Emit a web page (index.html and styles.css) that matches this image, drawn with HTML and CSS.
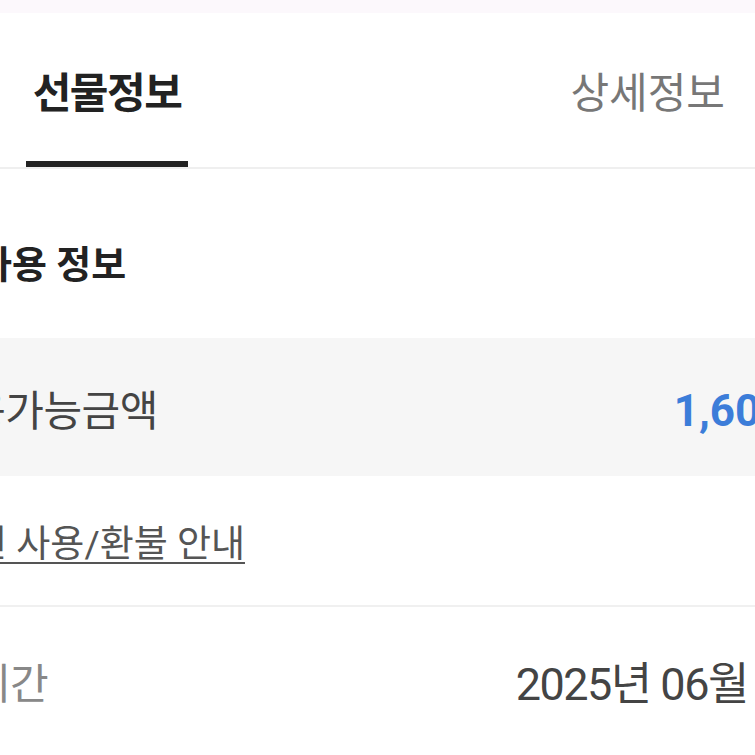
FILE: index.html
```html
<!DOCTYPE html>
<html lang="ko">
<head>
    <meta charset="UTF-8">
    <meta name="viewport" content="width=device-width, initial-scale=1.0">
    <title>선물정보</title>
    <link rel="stylesheet" href="styles.css">
</head>
<body>
    <div class="status"></div>

    <div class="tabs">
        <a class="tab tab-on">선물정보</a>
        <a class="tab tab-off">상세정보</a>
    </div>

    <div class="sheet">
        <h2 class="title">사용 정보</h2>

        <div class="amount">
            <span class="amount-label">사용가능금액</span>
            <span class="amount-value">1,600원</span>
        </div>

        <div class="guide">
            <a class="guide-link">상품권 사용/환불 안내</a>
        </div>

        <div class="period">
            <span class="period-label">유효기간</span>
            <span class="period-value">2025년 06월 30일</span>
        </div>
    </div>
</body>
</html>
```

FILE: styles.css
```css
*{
    padding: 0;
    margin: 0;
    box-sizing: border-box;
}
html, body{
    width: 755px;
    height: 755px;
    overflow: hidden;
    background: #fff;
}
body{
    font-family: Roboto, "Noto Sans CJK KR", sans-serif;
    color: #222;
}

/* 상단 상태바 */
.status{
    height: 13px;
    background: #fcf8fc;
}

/* 탭 */
.tabs{
    display: flex;
    height: 156px;
    padding-left: 26px;
    padding-right: 30px;
    border-bottom: 2px solid #efefef;
}
.tab{
    display: block;
    padding: 51px 0 37px;
    height: 154px;
    font-size: 42px;
    line-height: 60px;
    border-bottom: 6px solid transparent;
}
.tab-on{
    width: 162px;
    text-align: center;
    letter-spacing: -1.5px;
    font-weight: 700;
    color: #222;
    border-bottom-color: #222;
}
.tab-off{
    margin-left: auto;
    color: #777;
}

/* 본문 : 화면 좌우로 잘려 보임 */
.sheet{
    margin: 0 -90px 0 -120px;
}
.title{
    padding: 66px 0 43px 97px;
    font-size: 38px;
    line-height: 60px;
    font-weight: 700;
    color: #222;
}

.amount{
    display: flex;
    justify-content: space-between;
    align-items: center;
    height: 138px;
    padding: 0 19px 0 49px;
    background: #f6f6f6;
}
.amount-label{
    font-size: 42px;
    letter-spacing: -0.5px;
    color: #444;
}
.amount-value{
    font-size: 44px;
    font-weight: 700;
    color: #3c7dd9;
}

.guide{
    display: flex;
    align-items: center;
    height: 131px;
    padding-left: 25px;
    border-bottom: 2px solid #f0f0f0;
}
.guide-link{
    font-size: 37px;
    color: #555;
    text-decoration: underline;
    text-decoration-thickness: 2px;
    text-underline-offset: 5px;
}

.period{
    display: flex;
    justify-content: space-between;
    align-items: center;
    height: 146px;
    padding: 0 0 0 17px;
}
.period-label{
    font-size: 42px;
    letter-spacing: -1px;
    color: #888;
}
.period-value{
    font-size: 45px;
    letter-spacing: -1.5px;
    color: #444;
}
```
